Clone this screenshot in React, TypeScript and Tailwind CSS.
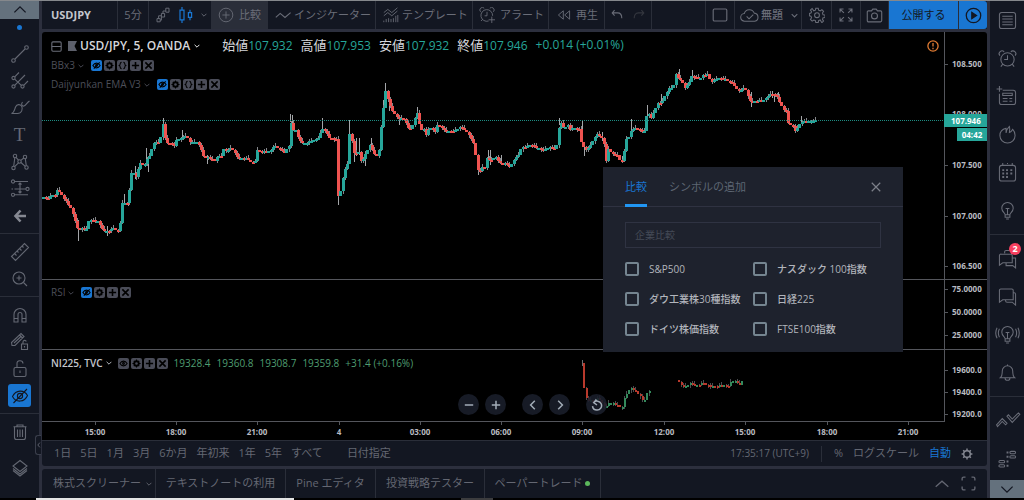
import React, { useState } from "react";

type IconProps = {
  children: React.ReactNode;
  className?: string;
  width?: number;
};

const Icon = ({ children, className = "size-5", width = 1.1 }: IconProps) => (
  <svg
    viewBox="0 0 20 20"
    className={`${className} shrink-0`}
    fill="none"
    stroke="currentColor"
    strokeWidth={width}
    aria-hidden="true"
  >
    {children}
  </svg>
);

const Chevron = ({ className = "size-2" }: { className?: string }) => (
  <Icon className={className} width={3}>
    <path d="M2 6l8 8 8-8" />
  </Icon>
);

/* ---------- chart data ---------- */

type Point = [number, number];
type Wick = [number, number, number];

const USDJPY: Point[] = [
  [42, 198], [50, 198], [52, 194], [56, 196], [58.5, 188], [60.5, 192], [63, 196], [67.5, 203],
  [71.5, 208], [74, 216], [76.5, 223], [79, 233], [81.5, 227], [86, 231], [90, 220], [93, 219],
  [96.5, 223], [98, 220], [100.5, 226], [104, 230], [107.5, 231], [110, 231], [115, 227],
  [117.5, 231], [120.4, 231], [121.5, 204], [124.5, 203], [129, 202], [130.8, 174], [133.5, 171],
  [136, 178], [138, 175], [139.5, 162], [145, 166], [148, 158], [151.5, 153], [153.5, 143],
  [160, 143], [162, 133], [163, 120], [164.5, 132], [167, 144], [172.5, 143], [174, 150],
  [176, 140], [180.5, 140], [183, 136], [188, 137], [190.5, 143], [196.5, 141], [200.5, 146],
  [203, 156], [210, 158], [215, 161], [217.5, 156], [222.5, 156], [223.5, 149], [226.5, 151],
  [232.5, 148], [236, 154], [239, 159], [246.5, 158], [253, 162], [256, 161], [257, 151],
  [270, 152], [275, 145], [280, 149], [285, 152], [288, 149], [290, 145], [291, 119],
  [293, 131], [296.5, 129], [299, 139], [303, 144], [315, 140], [320, 136], [323, 128],
  [326, 132], [330, 137], [337.4, 140], [338.5, 197], [341.5, 190], [345, 170], [348.6, 163],
  [350, 133], [352.5, 140], [355, 155], [359, 152], [361.5, 161], [365, 157], [367.5, 151],
  [370.5, 146], [373, 150], [377, 157], [380, 148], [381.5, 130], [384, 108], [385.5, 87],
  [388, 98], [390.5, 105], [393, 112], [396.5, 115], [400, 120], [402.5, 117], [406.5, 123],
  [410.5, 130], [414, 123], [417.5, 112], [420, 123], [422.5, 131], [425, 128], [427.5, 139],
  [429.5, 127], [433, 128], [435, 135], [437.5, 125], [441.5, 126], [446, 132], [456.5, 130],
  [460, 127], [465, 129], [469, 134], [473, 142], [475.6, 145], [477, 165], [479.5, 173],
  [482.5, 168], [486, 168], [487.5, 157], [490.5, 161], [496.5, 157], [500, 163], [506.5, 164],
  [511.5, 167], [513.5, 160], [518.5, 156], [521.5, 148], [527.5, 147], [531.5, 144],
  [536.5, 148], [544, 150], [550, 147], [556.5, 149], [558.5, 140], [560, 121], [564, 127],
  [568.5, 125], [571.5, 131], [574, 127], [580.5, 130], [582.5, 145], [586.5, 150],
  [590.5, 146], [595, 138], [597.5, 134], [601.5, 137], [605, 145], [606.8, 162], [609, 149],
  [613.5, 154], [617.5, 155], [620, 160], [624.2, 160], [625.5, 140], [629, 138], [632.5, 128],
  [638, 129], [644.8, 132], [646.5, 118], [649, 112], [651.5, 119], [655, 111], [657.5, 103],
  [662.5, 103], [666.5, 93], [670, 88], [674, 87], [676.5, 74], [680, 79], [683.5, 83],
  [685, 89], [689.5, 82], [692.5, 76], [700, 79], [702.5, 75], [709.5, 75], [711, 82],
  [716.5, 79], [725, 78], [729.5, 82], [734, 83], [737.5, 90], [741.5, 91], [745.5, 86],
  [747.5, 95], [752.5, 103], [756, 100], [763.5, 101], [768.5, 96], [772.5, 93], [778.5, 98],
  [781.5, 105], [785, 110], [787, 112], [788.5, 123], [793.5, 126], [795.5, 131], [799, 128],
  [801, 121], [808.5, 122], [813.5, 120], [816, 120],
];

const USDJPY_WICKS: Wick[] = [
  [78, 220, 241], [107, 226, 236], [124, 194, 205], [128, 198, 206], [135, 166, 179],
  [146, 148, 165], [148, 158, 172], [163, 118, 130], [207, 155, 164], [182, 130, 140],
  [290, 114, 122], [292, 115, 130], [322, 118, 132], [338, 190, 205], [349, 120, 140],
  [354, 150, 162], [356, 138, 156], [359, 138, 155], [365, 155, 166], [371, 138, 150],
  [383, 100, 112], [385, 83, 92], [389, 98, 111], [399, 115, 125], [417, 107, 118],
  [478, 165, 175], [488, 150, 160], [490, 150, 165], [501, 155, 165], [559, 118, 125],
  [582, 120, 145], [584, 145, 156], [602, 132, 141], [622, 156, 163], [631, 119, 130],
  [647, 105, 120], [661, 94, 106], [679, 69, 80], [692, 70, 80], [751, 92, 107],
  [772, 91, 98], [774, 95, 102], [778, 92, 100], [801, 116, 124],
];

const NIKKEI_AM: Point[] = [
  [582, 363], [583.4, 381], [585, 395], [587.5, 400], [593, 401], [599, 397], [603, 405],
  [606.5, 407], [610, 402], [615, 404], [621.5, 408], [624, 404], [625, 396], [629, 391],
  [631.5, 388], [637, 392], [640, 396], [644, 402], [646.5, 395], [648.5, 391], [651, 391],
];

const NIKKEI_PM: Point[] = [
  [677, 380], [680.5, 384], [685.5, 387], [690, 384], [698, 385], [703.5, 383], [711.5, 387],
  [720, 385], [730, 386], [731.5, 380], [736.5, 382], [740, 384], [743, 380],
];

const BAR = 2.25;

const valueAt = (points: Point[], x: number) => {
  const i = points.findIndex((p) => p[0] >= x);
  if (i <= 0) return points[i === 0 ? 0 : points.length - 1][1];
  const [x0, y0] = points[i - 1];
  const [x1, y1] = points[i];
  return y0 + ((y1 - y0) * (x - x0)) / (x1 - x0);
};

const buildCandles = (points: Point[]) => {
  const candles = [];
  const end = points[points.length - 1][0];
  let open = points[0][1];
  let n = 0;
  for (let x = points[0][0] + BAR; x <= end + 0.1; x += BAR) {
    const noise = ((n * 7) % 5) - 2;
    const close = valueAt(points, x) + noise * 0.3;
    candles.push({
      x: Math.round(x) - 1,
      open,
      close,
      high: Math.min(open, close) - ((n * 5) % 4),
      low: Math.max(open, close) + ((n * 3) % 4) * 0.8,
    });
    open = close;
    n++;
  }
  return candles;
};

type CandlesProps = {
  points: Point[];
  up: string;
  down: string;
  wick: string;
  body?: number;
};

const Candles = ({ points, up, down, wick, body = 2 }: CandlesProps) => {
  const candles = buildCandles(points);
  return (
    <g>
      {candles.map((c) => (
        <rect key={`w${c.x}`} x={c.x} y={c.high} width="1" height={c.low - c.high} fill={wick} />
      ))}
      {candles.map((c) => (
        <rect
          key={`b${c.x}`}
          x={body > 2 ? c.x - 1 : c.x}
          y={Math.min(c.open, c.close)}
          width={body}
          height={Math.max(2, Math.abs(c.open - c.close))}
          fill={c.close <= c.open ? up : down}
        />
      ))}
    </g>
  );
};

type AxisProps = { labels: [string, number][] };

const PriceAxis = ({ labels }: AxisProps) => (
  <svg className="h-full w-[43px] shrink-0 border-l border-[#54565c]">
    {labels.map(([text, y]) => (
      <g key={text}>
        <path d={`M0 ${y}.5h3`} stroke="#54565c" />
        <text x="7" y={y + 3} fill="#b9bbc1" className="text-[8px] font-bold">
          {text}
        </text>
      </g>
    ))}
  </svg>
);

/* ---------- legend ---------- */

const legendIcons: Record<string, React.ReactNode> = {
  表示: (
    <>
      <path d="M2 10c4-7 12-7 16 0-4 7-12 7-16 0z" />
      <circle cx="10" cy="10" r="2" />
    </>
  ),
  非表示: (
    <>
      <path d="M2 10c4-7 12-7 16 0-4 7-12 7-16 0zM4 17L17 3" />
      <circle cx="10" cy="10" r="2" />
    </>
  ),
  設定: (
    <>
      <circle cx="10" cy="10" r="5" strokeWidth="4" />
      <path d="M10 1v4M10 15v4M1 10h4M15 10h4M4 4l3 3M13 13l3 3M16 4l-3 3M7 13l-3 3" />
    </>
  ),
  ソース: <path d="M8 3C3 3 6 9 3 10c3 1 0 7 5 7M12 3c5 0 2 6 5 7-3 1 0 7-5 7" />,
  追加: <path d="M10 2v16M2 10h16" strokeWidth="3.5" />,
  削除: <path d="M3 3l14 14M17 3L3 17" strokeWidth="3.5" />,
};

const LegendButtons = ({ names }: { names: string[] }) => (
  <div className="flex gap-[2px]">
    {names.map((name) => (
      <button
        key={name}
        type="button"
        aria-label={name}
        className={`flex size-[11px] items-center justify-center rounded-[2px] text-black ${
          name === "非表示" ? "bg-[#1976d2]" : "bg-[#4a4c58]"
        }`}
      >
        <Icon className="size-[9px]" width={2.4}>
          {legendIcons[name]}
        </Icon>
      </button>
    ))}
  </div>
);

const Study = ({ name, buttons }: { name: string; buttons: string[] }) => (
  <div className="flex h-[19px] items-center text-[10px] text-[#4c4e58]">
    <span>{name}</span>
    <Chevron className="mr-[7px] ml-[3px] size-[6px]" />
    <LegendButtons names={buttons} />
  </div>
);

/* ---------- side bars ---------- */

const leftGroups: { label: string; icon: React.ReactNode }[][] = [
  [
    {
      label: "トレンドライン",
      icon: (
        <Icon>
          <circle cx="16.5" cy="3.5" r="1.8" />
          <circle cx="3.5" cy="16.5" r="1.8" />
          <path d="M5 15L15 5" />
        </Icon>
      ),
    },
    {
      label: "ピッチフォーク",
      icon: (
        <Icon>
          <circle cx="3.5" cy="7" r="1.6" />
          <circle cx="3.5" cy="15.5" r="1.6" />
          <circle cx="12.5" cy="15.5" r="1.6" />
          <path d="M4.7 5.8L9 1.5M4.7 14.3L15 4M13.7 14.3L18 10M4.7 8.1l6.6 6.3" />
        </Icon>
      ),
    },
    {
      label: "ブラシ",
      icon: (
        <Icon>
          <path d="M1.5 15.5c3-1 3-4 4-6.5C7 6 10 6 11.5 8c2 3 0 7.5-4 7.5z" />
          <path d="M12.5 4c-1.5 2-1 4.5 1.500 4 2-.5 3-3.500 5.500-5" />
        </Icon>
      ),
    },
    {
      label: "テキスト",
      icon: <span className="font-['Liberation_Serif',serif] text-[19px] leading-5">T</span>,
    },
    {
      label: "パターン",
      icon: (
        <Icon>
          <circle cx="5" cy="4" r="1.7" />
          <circle cx="15" cy="5" r="1.7" />
          <circle cx="9.5" cy="9.5" r="1.7" />
          <circle cx="3.5" cy="16" r="1.7" />
          <circle cx="16.5" cy="15.5" r="1.7" />
          <path d="M3.7 14.3L4.8 5.7M6 5.3l2.500 2.900M10.8 8.4l3-2.400M15.3 6.7l1 7.100M11 10.5l4.200 3.800M8.5 10.9l-3.900 3.800" />
        </Icon>
      ),
    },
    {
      label: "予測",
      icon: (
        <Icon>
          <circle cx="3" cy="2.5" r="1.6" />
          <circle cx="17.5" cy="10" r="1.6" />
          <circle cx="3" cy="15.8" r="1.6" />
          <path d="M4.6 2.5H18M4.6 15.8H18M1.5 10h1.5M4.5 10h11.400M10 4v10M8.5 5.5L10 4l1.500 1.500M8.5 12.5L10 14l1.500-1.500" />
        </Icon>
      ),
    },
    {
      label: "矢印",
      icon: (
        <span className="text-[#858892]">
          <Icon width={2.6}>
            <path d="M10.5 4.5L5.5 10l5 5.500M5.5 10H16" />
          </Icon>
        </span>
      ),
    },
  ],
  [
    {
      label: "ものさし",
      icon: (
        <Icon>
          <path d="M1.5 14.5L14.5 1.5l4 4-13 13zM4.5 11.5l2 2M7 9l1.500 1.500M9.5 6.5l2 2M12 4l1.500 1.500" />
        </Icon>
      ),
    },
    {
      label: "ズームイン",
      icon: (
        <Icon>
          <circle cx="9" cy="9" r="6" />
          <path d="M13.5 13.5L17 17M9 6.5v5M6.5 9h5" />
        </Icon>
      ),
    },
  ],
  [
    {
      label: "マグネット",
      icon: (
        <Icon>
          <path d="M4 17V9.500a6 6 0 0112 0V17h-4V9.500a2 2 0 00-4 0V17zM4 13.5h4M12 13.5h4" />
        </Icon>
      ),
    },
    {
      label: "描画モードを保持",
      icon: (
        <Icon>
          <path d="M2 13.5L1.5 10.5 11 1.5l3 3-9 9zM4 11l7.500-7M9.5 3l3 3" />
          <path d="M11.5 12h6v5.500h-6zM13 12v-2a1.700 1.700 0 013.300-.5M14.5 14v1.500" />
        </Icon>
      ),
    },
    {
      label: "描画をロック",
      icon: (
        <Icon>
          <rect x="4" y="8.5" width="12" height="9" rx="1.5" />
          <path d="M7 8.5V5a3 3 0 016-.5M10 11.5v2.500" />
        </Icon>
      ),
    },
    {
      label: "描画を非表示",
      icon: (
        <span className="flex size-[23px] items-center justify-center rounded-[3px] bg-[#1976d2] text-[#131722]">
          <Icon>
            <path d="M2.5 10.5c3.500-7 11.500-7 15-1-3 7-11.500 7.500-15 1zM3.5 17L17 3" />
            <circle cx="10" cy="10" r="2.6" />
          </Icon>
        </span>
      ),
    },
  ],
  [
    {
      label: "削除",
      icon: (
        <Icon>
          <path d="M4.5 5v10.500a2 2 0 002 2h7a2 2 0 002-2V5M3.5 4.8h13M7 4.5V3h6v1.500M7.5 7.5V15M10 7.5V15M12.5 7.5V15" />
        </Icon>
      ),
    },
    {
      label: "オブジェクトツリー",
      icon: (
        <Icon>
          <path d="M10 2.5l7 5.500-7 5.500L3 8zM3 10.5l7 5.500 7-5.500M3 12.5l7 5.500 7-5.500" />
        </Icon>
      ),
    },
  ],
];

const LeftBar = () => (
  <aside className="relative flex w-[39px] shrink-0 flex-col bg-[#131722] text-[#646873]">
    <button
      type="button"
      aria-label="上へ"
      className="flex h-[18px] items-center justify-center bg-[#64717d] text-[#131722]"
    >
      <Icon className="size-4" width={1.6}>
        <path d="M3 13l7-7 7 7" />
      </Icon>
    </button>
    <div className="flex h-[21px] justify-center pt-[6px]">
      <span className="size-[5px] rounded-full bg-[#1976d2]" />
    </div>
    {leftGroups.map((group, i) => (
      <div
        key={i}
        className={`flex flex-col pb-1 ${i > 0 ? "border-t border-[#2a2e39] pt-1" : ""} ${
          i === 3 ? "gap-[9px]" : ""
        }`}
      >
        {group.map((tool) => (
          <button
            key={tool.label}
            type="button"
            aria-label={tool.label}
            className="flex h-[27px] items-center justify-center"
          >
            {tool.icon}
          </button>
        ))}
      </div>
    ))}
    <button
      type="button"
      aria-label="ツールバーを隠す"
      className="absolute right-[-2px] bottom-[43px] flex h-5 w-[6px] items-center justify-center rounded-l-[3px] border border-r-0 border-[#3a3e4b] bg-[#131722]"
    >
      <Icon className="size-[6px]" width={3}>
        <path d="M13 2l-7 8 7 8" />
      </Icon>
    </button>
  </aside>
);

const bulb = (
  <path d="M7.5 14.5c0-2-3.500-3-3.500-7a6 6 0 0112 0c0 4-3.500 5-3.500 7zM7.5 14.5v2.500h5v-2.500M8.5 19h3M8 8h4M10 8v6" />
);

const rightGroups: { label: string; badge?: string; icon: React.ReactNode }[][] = [
  [
    {
      label: "ウォッチリスト",
      icon: (
        <>
          <rect x="1.5" y="1.5" width="17" height="17" rx="2.5" />
          <path d="M4.5 5.5h11M4.5 8.5h11M4.5 11.5h11M4.5 14.5h11" />
        </>
      ),
    },
    {
      label: "アラート",
      icon: (
        <>
          <circle cx="10" cy="11" r="7" />
          <path d="M10 6.5V11H6.5M5 16l-2 2.500M15 16l2 2.500M2 7a3 3 0 014.500-4M18 7a3 3 0 00-4.500-4" />
        </>
      ),
    },
    {
      label: "ニュース",
      icon: (
        <>
          <path d="M5 3.5h11a2.500 2.500 0 012.500 2.500v10a2.500 2.500 0 01-2.500 2.500H4A2.500 2.500 0 011.500 16V7M1.5-1v6M-1.5 2h6" />
          <path d="M5 6.5h10v2.500H5zM5 12h5M5 15h5M12 12h3M12 15h3" />
        </>
      ),
    },
    {
      label: "ホットリスト",
      icon: (
        <path d="M8.500 3.500C4.500 4.500 2 7.500 2 11a8 8 0 0016 0c0-3-1-5-2.500-6.500-1 2-2 3-3.500 3.500.5-3 .5-5 0-6.500C10 3.500 8.500 6 8.500 8.500z" />
      ),
    },
    {
      label: "経済カレンダー",
      icon: (
        <>
          <rect x="1.5" y="2.5" width="17" height="16.5" rx="2.5" />
          <path d="M5 0v3M15 0v3M10 0v1" />
          <path
            d="M8.5 7.5h2M13 7.5h2M4.5 11h2M8.5 11h2M13 11h2M4.5 14.8h2M8.5 14.8h2M4.5 7.5h2"
            strokeWidth="2"
          />
        </>
      ),
    },
    { label: "マイアイデア", icon: bulb },
  ],
  [
    {
      label: "パブリックチャット",
      badge: "2",
      icon: (
        <path d="M7 4.5V3a1.500 1.500 0 011.500-1.500H12M3.5 5.5h10A1.500 1.500 0 0115 7v7.500H5L1.5 17V7a1.500 1.500 0 012-1.500zM15 9.5h3.500V20L15.5 17.5H8.5V15" />
      ),
    },
    {
      label: "プライベートチャット",
      icon: (
        <path d="M3 2h11.500A1.500 1.500 0 0116 3.500v10H5L1.5 16V3.500A1.500 1.500 0 013 2zM16 6h1a1.500 1.500 0 011.500 1.500V19L15 16H9.500a1.500 1.500 0 01-1.500-1.500v-1" />
      ),
    },
    {
      label: "アイデアストリーム",
      icon: (
        <>
          {bulb}
          <path d="M1.5 4c-1.500 3-1.500 6 0 9M-1 3c-2 4-2 7 0 11M18.5 4c1.500 3 1.500 6 0 9M21 3c2 4 2 7 0 11" />
        </>
      ),
    },
    {
      label: "お知らせ",
      icon: (
        <path d="M10 1.5v1M2.5 15.5c2-1.500 2-4 2-7a5.500 5.500 0 0111 0c0 3 0 5.500 2 7zM7.5 16c0 3 5 3 5 0" />
      ),
    },
  ],
  [
    {
      label: "注文パネル",
      icon: (
        <path d="M-1.5 14.5L4.5 8l5 5-1.500 1.500L4.5 11-.5 16.500zM9.5 5.5L11 4l4 4.500L21.5 2 23 3.500 15 12z" />
      ),
    },
    {
      label: "板情報",
      icon: (
        <>
          <rect x="12.5" y="2.5" width="6" height="2.5" rx="1.2" />
          <rect x="12.5" y="7" width="6" height="2.5" rx="1.2" />
          <rect x="1" y="12" width="6" height="2.5" rx="1.2" />
          <rect x="1" y="16.5" width="6" height="2.5" rx="1.2" />
          <path d="M9 3.7h2M9 8.2h2M9 13.2h2M9 17.7h2" strokeWidth="2" />
        </>
      ),
    },
  ],
];

const RightBar = () => (
  <aside className="flex w-[34px] shrink-0 flex-col bg-[#131722] text-[#6a6d78]">
    {rightGroups.map((group, i) => (
      <div
        key={i}
        className={`flex flex-col ${i > 0 ? "border-t border-[#2a2e39] pt-1" : ""} ${
          i < 2 ? "pb-[5px]" : ""
        }`}
      >
        {group.map((tool) => (
          <button
            key={tool.label}
            type="button"
            aria-label={tool.label}
            className="relative flex h-[38px] items-center justify-center"
          >
            <Icon className="size-[19px] overflow-visible">{tool.icon}</Icon>
            {tool.badge && (
              <span className="absolute top-1 right-[3px] flex size-3 items-center justify-center rounded-full bg-[#f7405f] text-[9px] font-bold text-white">
                {tool.badge}
              </span>
            )}
          </button>
        ))}
      </div>
    ))}
    <button
      type="button"
      aria-label="下へ"
      className="mt-auto flex h-[18px] items-center justify-center bg-[#64717d] text-[#131722]"
    >
      <Icon className="size-4" width={1.6}>
        <path d="M3 7l7 7 7-7" />
      </Icon>
    </button>
  </aside>
);

/* ---------- top bar ---------- */

type CellProps = {
  className: string;
  label?: string;
  children: React.ReactNode;
};

const Cell = ({ className, label, children }: CellProps) => (
  <button
    type="button"
    aria-label={label}
    className={`flex shrink-0 items-center border-r border-[#2a2e39] ${className}`}
  >
    {children}
  </button>
);

const TopBar = () => (
  <header className="flex h-7 shrink-0 overflow-hidden bg-[#131722] text-[11px] whitespace-nowrap text-[#6a6d78]">
    <Cell className="w-[76px] pl-[9px] font-bold text-[#c3c6cd]">USDJPY</Cell>
    <Cell className="w-[31px] justify-center">5分</Cell>
    <Cell className="w-[63px] gap-[7px] pl-[6px]" label="チャートタイプ">
      <Icon className="size-4" width={1.2}>
        <path d="M2.5 14.5h4v4h-4zM8 8h4v4.500H8zM13.5 1.5h4v5h-4zM4.5 14.5V11H8M10 8V5h3.500M6.5 16.5H8v-4" />
      </Icon>
      <span className="text-[#1976d2]">
        <Icon className="size-4" width={1.5}>
          <path d="M2.5 4h5v12h-5zM5 0v4M5 16v4M13 7h4v6h-4zM15 3.5V7M15 13v3.500" />
        </Icon>
      </span>
      <Chevron className="size-[6px]" />
    </Cell>
    <Cell className="w-14 gap-[5px] bg-[#2a2e39] pl-[6px]">
      <Icon className="size-4">
        <circle cx="10" cy="10" r="8.5" />
        <path d="M10 5.5v9M5.5 10h9" />
      </Icon>
      比較
    </Cell>
    <Cell className="w-[108px] gap-[3px] pl-[7px]">
      <Icon className="size-4" width={1.4}>
        <path d="M1 13l5.500-5 6 5 7-6" />
      </Icon>
      インジケーター
    </Cell>
    <Cell className="w-[97px] gap-[3px] pl-[7px]">
      <Icon className="size-4">
        <path d="M1 7l5-4 5 4 7-6M1 11l5-4 5 4 7-6M1 19v-2M4 19v-4M7 19v-5M10 19v-4M13 19v-5M16 19v-8M18.5 19v-9" />
      </Icon>
      テンプレート
    </Cell>
    <Cell className="w-[76px] gap-[5px] pl-[6px]">
      <Icon className="size-4">
        <path d="M12 17.5A7.300 7.300 0 1117 11M10 6v5H7M2 6a3 3 0 014.500-4.500M18 6a3 3 0 00-4.500-4.500M16 12v8M12 16h8M4.5 15.5l-2 2" />
      </Icon>
      アラート
    </Cell>
    <Cell className="w-14 gap-[5px] pl-2">
      <Icon className="size-[14px]" width={1.3}>
        <path d="M9 4v12L2 10zM18 4v12l-7-6z" />
      </Icon>
      再生
    </Cell>
    <Cell className="w-[47px] gap-[10px] pl-[6px]" label="元に戻す">
      <Icon className="size-3" width={1.8}>
        <path d="M6 2L2 6.5 6 11M2 6.5h9c5 0 7 4 7 9" />
      </Icon>
      <span className="text-[#34373f]">
        <Icon className="size-3" width={1.8}>
          <path d="M14 2l4 4.500-4 4.500M18 6.5H9c-5 0-7 4-7 9" />
        </Icon>
      </span>
    </Cell>
    <div className="min-w-0 flex-1 border-r border-[#2a2e39]" />
    <Cell className="w-[29px] justify-center" label="レイアウト">
      <Icon className="size-4" width={1.4}>
        <rect x="1.5" y="2.5" width="17" height="15" rx="1.5" />
      </Icon>
    </Cell>
    <Cell className="w-[67px] gap-[2px] pl-[5px] font-medium">
      <Icon className="size-[19px]">
        <path d="M5 16a4 4 0 01-.5-8A5.500 5.500 0 0115 7.500a4.300 4.300 0 01.500 8.500zM7 11l2.500 2.500 4.500-4.500" />
      </Icon>
      無題
      <Chevron className="ml-[6px] size-[7px]" />
    </Cell>
    <Cell className="w-[30px] justify-center" label="設定">
      <Icon className="size-4" width={1.3}>
        <path d="M8.5 1.5h3l.500 2.500 2 .8 2.100-1.400 2.100 2.100-1.400 2.100.8 2 2.400.4v3l-2.400.400-.8 2 1.400 2.100-2.100 2.100L14 16.200l-2 .8-.5 2.500h-3L8 17l-2-.8-2.100 1.400-2.100-2.100 1.400-2.100-.8-2-1.900-.4V8l1.900-.4.8-1.600-1.400-2.100 2.100-2.100L6 4.800 8 4z" />
        <circle cx="10" cy="10.3" r="3" />
      </Icon>
    </Cell>
    <Cell className="w-[29px] justify-center" label="全画面表示">
      <Icon className="size-[14px]" width={1.6}>
        <path d="M1.5 6.5v-5h5M1.5 1.5L7 7M13.5 1.5h5v5M18.5 1.5L13 7M1.5 13.5v5h5M1.5 18.5L7 13M18.5 13.5v5h-5M18.5 18.5L13 13" />
      </Icon>
    </Cell>
    <Cell className="w-[28px] justify-center" label="スナップショット">
      <Icon className="size-[17px]" width={1.3}>
        <path d="M3 4.5h3.500L8 2.500h4l1.500 2H17A1.500 1.500 0 0118.500 6v10a1.500 1.500 0 01-1.500 1.500H3A1.500 1.500 0 011.500 16V6A1.500 1.500 0 013 4.500z" />
        <circle cx="10" cy="10.5" r="3.5" />
      </Icon>
    </Cell>
    <Cell className="w-[70px] justify-center bg-[#1976d2] text-[#131722]">公開する</Cell>
    <button
      type="button"
      aria-label="配信"
      className="flex w-[28px] shrink-0 items-center justify-center rounded-r-[3px] bg-[#1976d2] text-[#131722]"
    >
      <Icon className="size-[17px]" width={1.5}>
        <circle cx="10" cy="10" r="8.5" />
        <path d="M8 6.5v7l5.500-3.500z" fill="currentColor" />
      </Icon>
    </button>
  </header>
);

/* ---------- compare dialog ---------- */

const symbols = [
  "S&P500",
  "ナスダック 100指数",
  "ダウ工業株30種指数",
  "日経225",
  "ドイツ株価指数",
  "FTSE100指数",
];

const CompareDialog = () => {
  const [tab, setTab] = useState("比較");

  return (
    <div
      role="dialog"
      aria-label="比較"
      className="absolute top-[135px] right-[84px] w-[300px] bg-[#1e222d] pb-4"
    >
      <div className="flex h-10 items-stretch gap-[22px] border-b border-[#2f3241] px-[22px] text-[11px]">
        {["比較", "シンボルの追加"].map((name) => (
          <button
            key={name}
            type="button"
            onClick={() => setTab(name)}
            className={
              tab === name
                ? "-mb-px border-b-[3px] border-[#2196f3] pt-[3px] text-[#1976d2]"
                : "-mb-px border-b-[3px] border-transparent pt-[3px] text-[#5d6673]"
            }
          >
            {name}
          </button>
        ))}
        <button type="button" aria-label="閉じる" className="ml-auto text-[#7d8089]">
          <Icon className="size-[10px]" width={2.4}>
            <path d="M1.5 1.5l17 17M18.5 1.5l-17 17" />
          </Icon>
        </button>
      </div>
      <div className="px-[22px] pt-[14px]">
        <input
          type="text"
          aria-label="企業比較"
          placeholder="企業比較"
          className="h-[26px] w-full border border-[#2f3342] bg-transparent px-[9px] text-[10px] text-[#b2b5be] placeholder:text-[#454b57]"
        />
        <div className="grid grid-cols-2 gap-y-4 pt-[14px]">
          {symbols.map((name) => (
            <label
              key={name}
              className="flex items-center gap-[10px] text-[10px] leading-[14px] font-medium whitespace-nowrap text-[#b2b5bc]"
            >
              <input
                type="checkbox"
                className="size-[14px] shrink-0 appearance-none rounded-[2px] border-2 border-[#758590]"
              />
              {name}
            </label>
          ))}
        </div>
      </div>
    </div>
  );
};

/* ---------- chart ---------- */

const ohlc = [
  ["始値", "107.932"],
  ["高値", "107.953"],
  ["安値", "107.932"],
  ["終値", "107.946"],
];

const times: [string, number][] = [
  ["15:00", 53],
  ["18:00", 134],
  ["21:00", 215],
  ["4", 297],
  ["03:00", 378],
  ["06:00", 459],
  ["09:00", 540],
  ["12:00", 622],
  ["15:00", 703],
  ["18:00", 785],
  ["21:00", 866],
];

const navButtons = [
  { label: "ズームアウト", d: "M3 10h14", space: "" },
  { label: "ズームイン", d: "M3 10h14M10 3v14", space: "" },
  { label: "左へスクロール", d: "M13 3l-7 7 7 7", space: "ml-[10px]" },
  { label: "右へスクロール", d: "M7 3l7 7-7 7", space: "" },
  {
    label: "チャートをリセット",
    d: "M4.5 6A7.500 7.500 0 1110 18.500 7.500 7.500 0 012.500 12M9 1L4.5 6l5.500 4",
    space: "ml-[10px]",
  },
];

const Chart = () => (
  <section className="relative flex min-h-0 flex-1 flex-col overflow-hidden rounded-t-[3px] bg-black">
    <div className="relative flex min-h-0 flex-1 border-b border-[#54565c]">
      <div className="relative min-w-0 flex-1">
        <svg className="absolute inset-0 h-full w-full" shapeRendering="crispEdges">
          <g transform="translate(-42 -32)">
            {USDJPY_WICKS.map(([x, top, bottom]) => (
              <rect key={x} x={x} y={top} width="1" height={bottom - top} fill="#a3a5a8" />
            ))}
            <Candles points={USDJPY} up="#26a69a" down="#ef5350" wick="#85878b" body={3} />
          </g>
          <line x1="0" x2="100%" y1="88.5" y2="88.5" stroke="#1d8c82" strokeDasharray="1 1" />
        </svg>
        <div className="relative pt-1 pr-[5px] pl-[9px]">
          <div className="flex h-5 items-center text-[12px] whitespace-nowrap text-[#26a69a]">
            <button type="button" aria-label="折りたたむ" className="mr-[6px] text-[#6a6d78]">
              <Icon className="size-[11px]" width={2}>
                <rect x="1.5" y="1.5" width="17" height="17" rx="2" />
                <path d="M1.5 10h17" />
              </Icon>
            </button>
            <svg viewBox="0 0 9 10" className="mr-[3px] h-[10px] w-[9px]" fill="#5d606b">
              <path d="M0 0h9L6.500 5 9 10H0z" />
            </svg>
            <h1 className="font-semibold text-[#d5d7dc]">USD/JPY, 5, OANDA</h1>
            <Chevron className="mr-[22px] ml-1 size-[6px] text-white" />
            <div className="flex gap-2">
              {ohlc.map(([name, value]) => (
                <span key={name}>
                  <span className="text-[13px] text-[#d5d7dc]">{name}</span>
                  {value}
                </span>
              ))}
              <span>+0.014 (+0.01%)</span>
            </div>
            <span className="ml-auto flex size-3 items-center justify-center text-[#e07b33]">
              <Icon className="size-3" width={2.2}>
                <circle cx="10" cy="10" r="8.5" />
                <path d="M10 5v6M10 13v2.500" />
              </Icon>
            </span>
          </div>
          <Study name="BBx3" buttons={["非表示", "設定", "ソース", "追加", "削除"]} />
          <Study name="Daijyunkan EMA V3" buttons={["非表示", "設定", "ソース", "追加", "削除"]} />
        </div>
      </div>
      <PriceAxis
        labels={[
          ["108.500", 32],
          ["108.000", 82],
          ["107.500", 133],
          ["107.000", 184],
          ["106.500", 234],
        ]}
      />
      <div className="absolute top-[82px] right-0 flex w-[43px] flex-col items-end gap-px text-[8px] leading-[13px] font-bold text-white">
        <span className="w-full bg-[#26a69a] pl-[7px]">107.946</span>
        <span className="w-[30px] bg-[#26a69a] text-center">04:42</span>
      </div>
    </div>

    <div className="flex h-[70px] shrink-0 border-b border-[#54565c]">
      <div className="min-w-0 flex-1 px-[9px] pt-[3px]">
        <Study name="RSI" buttons={["非表示", "設定", "追加", "削除"]} />
      </div>
      <PriceAxis
        labels={[
          ["75.0000", 9],
          ["50.0000", 32],
          ["25.0000", 55],
        ]}
      />
    </div>

    <div className="flex h-[72px] shrink-0">
      <div className="relative min-w-0 flex-1 border-b border-[#54565c]">
        <svg className="absolute inset-0 h-full w-full" shapeRendering="crispEdges">
          <g transform="translate(-42 -350)">
            <rect x="582" y="360" width="1" height="6" fill="#6d6f73" />
            <Candles points={NIKKEI_AM} up="#348a5c" down="#b8392c" wick="#4b4d50" />
            <Candles points={NIKKEI_PM} up="#348a5c" down="#b8392c" wick="#4b4d50" />
          </g>
        </svg>
        <div className="relative flex h-[26px] items-center gap-[6px] px-[9px] text-[10px] whitespace-nowrap text-[#4f9d70]">
          <h2 className="flex items-center gap-[3px] text-[10px] font-semibold text-[#c3c6cd]">
            NI225, TVC <Chevron className="size-[6px]" />
          </h2>
          <LegendButtons names={["表示", "設定", "追加", "削除"]} />
          <span>19328.4</span>
          <span>19360.8</span>
          <span>19308.7</span>
          <span>19359.8</span>
          <span>+31.4 (+0.16%)</span>
        </div>
      </div>
      <PriceAxis
        labels={[
          ["19600.0", 20],
          ["19400.0", 42],
          ["19200.0", 64],
        ]}
      />
    </div>

    <svg className="h-[18px] w-full shrink-0">
      {times.map(([text, x]) => (
        <g key={x}>
          <path d={`M${x}.5 0v3`} stroke="#54565c" />
          <text x={x} y="13" textAnchor="middle" fill="#b9bbc1" className="text-[8px] font-bold">
            {text}
          </text>
        </g>
      ))}
    </svg>

    <div className="absolute bottom-[25px] left-[416px] flex gap-[6px]">
      {navButtons.map((b) => (
        <button
          key={b.label}
          type="button"
          aria-label={b.label}
          className={`flex size-[21px] items-center justify-center rounded-full bg-[#1a1e2a]/90 text-[#a3adb8] ${b.space}`}
        >
          <Icon className="size-3" width={2.5}>
            <path d={b.d} />
          </Icon>
        </button>
      ))}
    </div>

    <CompareDialog />
  </section>
);

/* ---------- bottom bars ---------- */

const ranges = ["1日", "5日", "1月", "3月", "6か月", "年初来", "1年", "5年", "すべて"];

const RangeBar = () => (
  <div className="flex h-[26px] shrink-0 items-center rounded-b-[3px] border-t border-[#2a2e39] bg-[#131722] px-3 text-[11px] whitespace-nowrap text-[#646772]">
    <div className="flex gap-[9px]">
      {ranges.map((r) => (
        <button key={r} type="button">
          {r}
        </button>
      ))}
    </div>
    <button type="button" className="ml-6">
      日付指定
    </button>
    <button type="button" className="ml-auto text-[10px]">
      17:35:17 (UTC+9)
    </button>
    <span className="mx-3 h-4 w-px bg-[#2a2e39]" />
    <div className="flex items-center gap-[10px]">
      <button type="button">%</button>
      <button type="button">ログスケール</button>
      <button type="button" className="text-[#1976d2]">
        自動
      </button>
      <button type="button" aria-label="スケール設定" className="mr-[2px] text-[#858892]">
        <Icon className="size-3" width={2.4}>
          <circle cx="10" cy="10" r="5.5" />
          <path d="M10 1v3.500M10 15.5V19M1 10h3.500M15.5 10H19M3.6 3.6l2.500 2.500M13.9 13.9l2.500 2.500M16.4 3.6l-2.500 2.500M6.1 13.9l-2.500 2.500" />
        </Icon>
      </button>
    </div>
  </div>
);

const TabBar = () => (
  <footer className="mt-[3px] flex h-[29px] shrink-0 rounded-t-[3px] bg-[#131722] text-[11px] whitespace-nowrap text-[#646772]">
    <Cell className="w-[114px] gap-[5px] pl-[11px]">
      株式スクリーナー
      <Chevron className="size-[6px]" />
    </Cell>
    <Cell className="w-[130px] justify-center">テキストノートの利用</Cell>
    <Cell className="w-[90px] justify-center">Pine エディタ</Cell>
    <Cell className="w-[109px] justify-center">投資戦略テスター</Cell>
    <Cell className="w-[116px] justify-center gap-[3px]">
      ペーパートレード
      <span className="size-[5px] rounded-full bg-[#5cb85c]" />
    </Cell>
    <div className="ml-auto flex items-center gap-3 pr-[11px]">
      <button type="button" aria-label="パネルを開く">
        <Icon className="size-[14px]" width={1.8}>
          <path d="M1 14l9-8 9 8" />
        </Icon>
      </button>
      <button type="button" aria-label="パネルを最大化">
        <Icon className="size-[15px]" width={1.8}>
          <path d="M1.5 6V3.500a2 2 0 012-2H6M14 1.5h2.500a2 2 0 012 2V6M18.5 14v2.500a2 2 0 01-2 2H14M6 18.5H3.500a2 2 0 01-2-2V14" />
        </Icon>
      </button>
    </div>
  </footer>
);

export default function App() {
  return (
    <div className="flex h-screen min-h-[500px] flex-col bg-[#2c2f3d] font-['Open_Sans','Noto_Sans_CJK_JP',sans-serif]">
      <div className="h-px shrink-0 bg-[#85888c]" />
      <div className="flex min-h-0 flex-1 gap-[3px]">
        <LeftBar />
        <main className="flex min-w-0 flex-1 flex-col">
          <TopBar />
          <div className="h-[3px] shrink-0" />
          <Chart />
          <RangeBar />
          <TabBar />
        </main>
        <RightBar />
      </div>
      <div className="flex h-[2px] shrink-0 bg-black pl-9">
        <span className="w-[258px] bg-[#e4e4e4]" />
        <span className="ml-[167px] w-8 bg-[#3c3c3e]" />
      </div>
    </div>
  );
}
